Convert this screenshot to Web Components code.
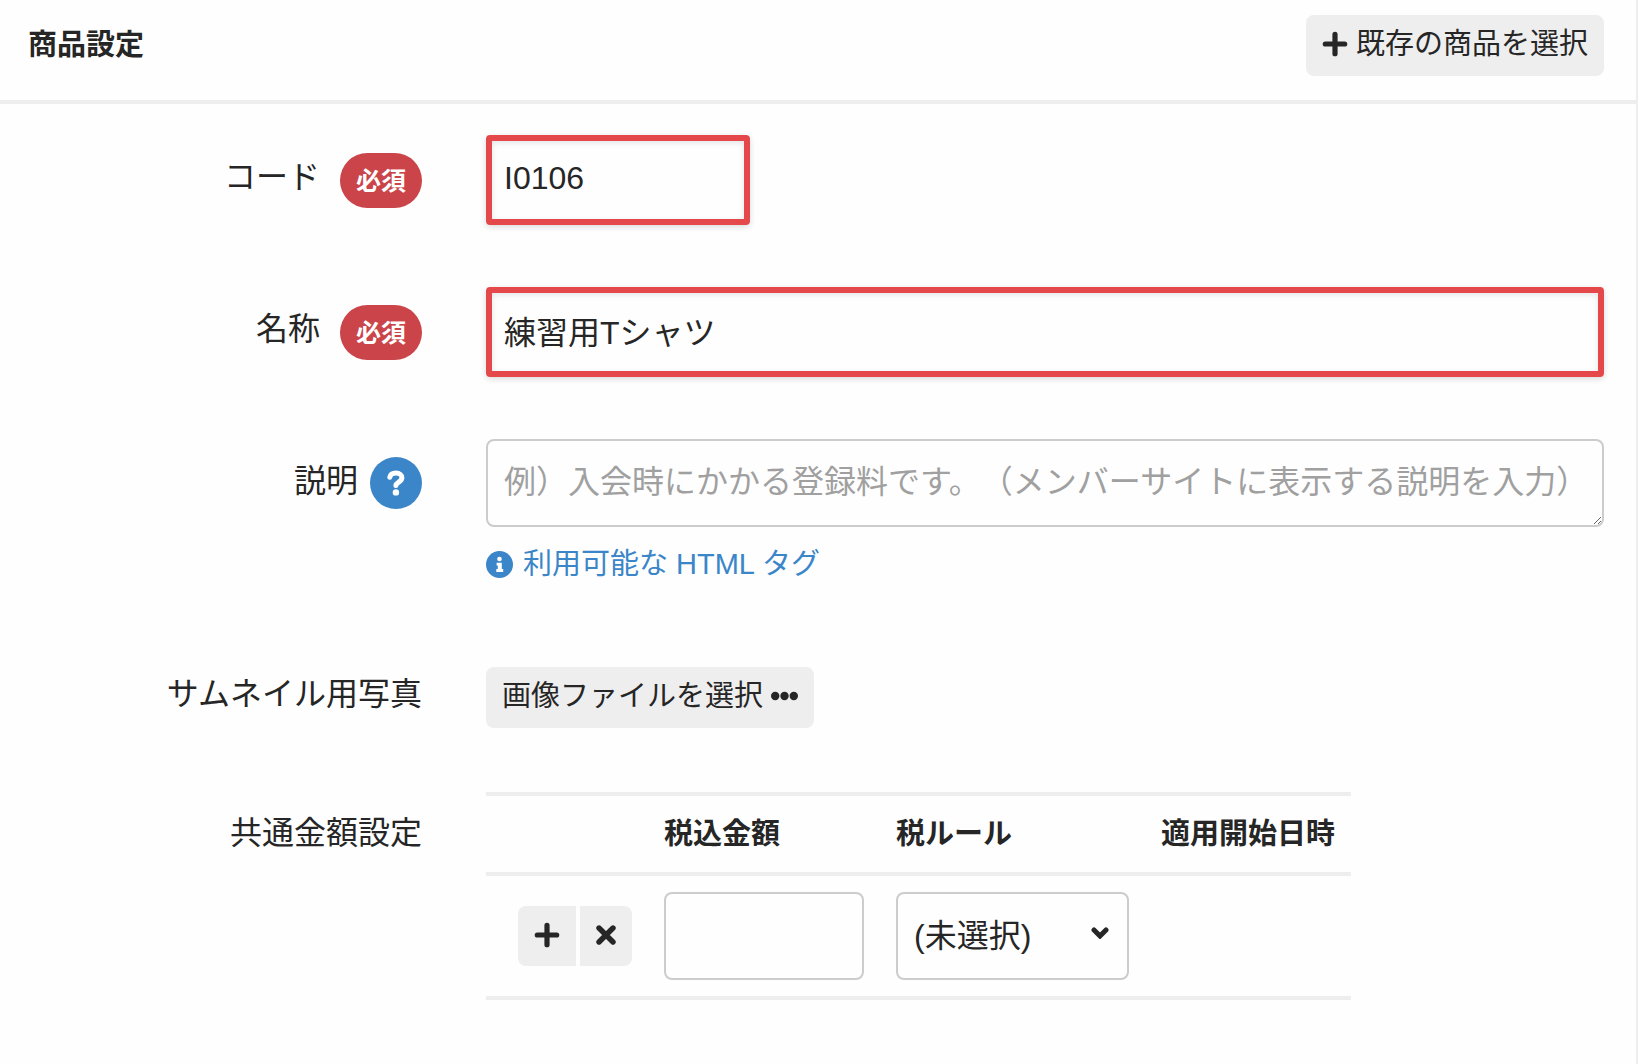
<!DOCTYPE html>
<html lang="ja">
<head>
<meta charset="utf-8">
<meta name="viewport" content="width=device-width, initial-scale=1">
<title>商品設定</title>
<style>
  :root {
    --ink: #262626;
    --line: #eeeeee;
    --edge: #cccccc;
    --blue: #3b86c8;
    --red: #ca444a;
    --mark: #e5484b;
    --hint: #a0a0a0;
    --small: 29px;
    --base: 32px;
  }
  html { background: #fefefe; }
  body {
    margin: 0;
    color: var(--ink);
    font-family: "Liberation Sans", "Noto Sans CJK JP", sans-serif;
    font-size: var(--base);
    line-height: 48px;
  }
</style>
</head>
<body>
<settings-panel>
  <h2 slot="title">商品設定</h2>
  <action-button slot="action"><fa-icon name="plus"></fa-icon>既存の商品を選択</action-button>
  <text-field label="コード" value="I0106" size="short"></text-field>
  <text-field label="名称" value="練習用Tシャツ"></text-field>
  <note-field label="説明" placeholder="例）入会時にかかる登録料です。（メンバーサイトに表示する説明を入力）">利用可能な HTML タグ</note-field>
  <plain-field label="サムネイル用写真"><action-button>画像ファイルを選択<fa-icon name="dots"></fa-icon></action-button></plain-field>
  <plain-field label="共通金額設定" tall><price-table></price-table></plain-field>
</settings-panel>

<script>
const ICONS = {
  plus: [26, 26, '<path d="M13 3.300v19.400M3.300 13h19.400" fill="none" stroke="currentColor" stroke-width="5.200" stroke-linecap="round"/>'],
  times: [20, 20, '<path d="M3 3l14 14M17 3L3 17" fill="none" stroke="currentColor" stroke-width="5.400" stroke-linecap="round"/>'],
  dots: [27, 10, '<circle cx="4.200" cy="5" r="4.200"/><circle cx="13.500" cy="5" r="4.200"/><circle cx="22.800" cy="5" r="4.200"/>'],
  question: [18, 26, '<path d="M2.800 7.300C3.400 4.500 5.700 3 8.900 3c3.700 0 6 2 6 4.700 0 4.300-5.700 4.300-6 7.800" fill="none" stroke="currentColor" stroke-width="5" stroke-linecap="round"/><circle cx="8.900" cy="22.400" r="3.200"/>'],
  info: [27, 27, '<circle cx="13.500" cy="13.500" r="13.500"/><circle cx="13.500" cy="8" r="2.300" fill="#fff"/><path d="M10.600 11.700h5.200v6.300h1.400v2.900h-6.900V18h1.500v-3.400h-1.200z" fill="#fff"/>']
};

function define(name, html) {
  customElements.define(name, class extends HTMLElement {
    constructor() {
      super();
      this.attachShadow({ mode: 'open' });
    }
    connectedCallback() {
      this.shadowRoot.innerHTML = typeof html === 'function' ? html(this) : html;
    }
  });
}

define('fa-icon', el => {
  const [w, h, body] = ICONS[el.getAttribute('name')];
  return `<style>:host{display:inline-flex;flex:none}svg{display:block}</style>
    <svg width="${w}" height="${h}" viewBox="0 0 ${w} ${h}" fill="currentColor" aria-hidden="true">${body}</svg>`;
});

define('action-button', `
  <style>
    :host { display: inline-flex; }
    button {
      display: flex; align-items: center; gap: 8px;
      border: 0; border-radius: 8px; padding: 7px 16px 10px;
      background: var(--line); color: inherit;
      font: inherit; font-size: var(--small); line-height: 44px; white-space: nowrap;
    }
  </style>
  <button type="button"><slot></slot></button>`);

define('required-badge', `
  <style>
    :host {
      display: block; padding: 4px 16px 3px; border-radius: 28px;
      background: var(--red); color: #fff;
      font-size: 25px; font-weight: 700;
    }
  </style>
  <slot></slot>`);

define('help-button', `
  <style>
    :host { display: flex; }
    button {
      display: flex; align-items: center; justify-content: center;
      width: 52px; height: 52px; padding: 0; border: 0; border-radius: 50%;
      background: var(--blue); color: #fff;
    }
  </style>
  <button type="button" aria-label="ヘルプ"><fa-icon name="question"></fa-icon></button>`);

define('settings-panel', `
  <style>
    :host {
      display: flex; flex-direction: column; box-sizing: border-box;
      min-height: 100vh; border-right: 2px solid var(--line);
    }
    header {
      display: flex; align-items: flex-start; justify-content: space-between;
      padding: 15px 32px 24px 28px; border-bottom: 4px solid var(--line);
    }
    ::slotted(h2) { margin: 0; padding-top: 8px; font-size: var(--small); line-height: 44px; }
    form {
      display: flex; flex-direction: column; gap: 62px;
      padding: 31px 32px 62px;
    }
  </style>
  <header><slot name="title"></slot><slot name="action"></slot></header>
  <form><slot></slot></form>`);

const ROW = `
  :host { display: grid; grid-template-columns: minmax(0, 15fr) minmax(0, 43fr); column-gap: 64px; }
  .head { display: flex; justify-content: flex-end; align-items: flex-start; white-space: nowrap; }
  .entry { min-width: 0; }
  input, textarea {
    display: block; box-sizing: border-box; width: 100%; margin: 0;
    background: transparent; color: inherit; font: inherit; line-height: 48px;
  }`;

define('text-field', el => `
  <style>
    ${ROW}
    .head { gap: 20px; padding-top: 18px; }
    input {
      height: 90px; padding: 13px 12px 17px;
      border: 6px solid var(--mark); border-radius: 4px;
      box-shadow: 0 2px 6px rgba(0,0,0,.14), inset 0 2px 6px rgba(0,0,0,.1);
    }
    .short { max-width: 264px; }
  </style>
  <div class="head"><label for="box">${el.getAttribute('label')}</label><required-badge>必須</required-badge></div>
  <div class="entry ${el.getAttribute('size') || ''}"><input id="box" type="text" required value="${el.getAttribute('value')}"></div>`);

define('note-field', el => `
  <style>
    ${ROW}
    .head { gap: 12px; padding-top: 18px; }
    textarea {
      height: 88px; padding: 17px 6px 19px 16px; border: 2px solid var(--edge); border-radius: 8px;
      overflow: hidden; resize: both; text-spacing-trim: space-all;
    }
    textarea::placeholder { color: var(--hint); opacity: 1; }
    a {
      display: flex; align-items: center; gap: 10px; padding: 15px 0 19px;
      color: var(--blue); font-size: var(--small); line-height: 44px; text-decoration: none;
    }
  </style>
  <div class="head"><label for="box">${el.getAttribute('label')}</label><help-button></help-button></div>
  <div class="entry">
    <textarea id="box" rows="1" placeholder="${el.getAttribute('placeholder')}"></textarea>
    <a href="#tags"><fa-icon name="info"></fa-icon><span><slot></slot></span></a>
  </div>`);

define('plain-field', el => `
  <style>
    ${ROW}
    .head { padding-top: 3px; }
    :host([tall]) .head { padding-top: 17px; }
    .entry { min-height: 63px; display: flex; align-items: flex-start; }
  </style>
  <div class="head">${el.getAttribute('label')}</div>
  <div class="entry"><slot></slot></div>`);

define('price-table', `
  <style>
    :host { display: block; }
    table { border-collapse: separate; border-spacing: 0; border-top: 4px solid var(--line); }
    th, td { padding: 16px; border-bottom: 4px solid var(--line); text-align: left; }
    th { font-size: var(--small); line-height: 44px; white-space: nowrap; }
    th:first-child, td:first-child { padding-left: 32px; }
    .pair { display: flex; gap: 4px; }
    .pair button {
      display: flex; align-items: center; justify-content: center;
      height: 60px; padding: 0 16px 2px; border: 0; background: var(--line); color: inherit;
    }
    .pair button:first-child { border-radius: 8px 0 0 8px; }
    .pair button:last-child { border-radius: 0 8px 8px 0; }
    input, select {
      display: block; box-sizing: border-box; height: 88px; margin: 0; padding: 0 16px;
      border: 2px solid var(--edge); border-radius: 8px;
      background: transparent; color: inherit; font: inherit;
    }
    input { width: 200px; }
    select {
      width: 233px; appearance: none;
      background: url('data:image/svg+xml,<svg xmlns="http://www.w3.org/2000/svg" width="18" height="12" viewBox="0 0 18 12"><path d="M3 3l6 6 6-6" fill="none" stroke="%23262626" stroke-width="5" stroke-linecap="round"/></svg>') no-repeat right 18px top 33px;
    }
  </style>
  <table>
    <thead><tr><th></th><th id="price" scope="col">税込金額</th><th id="rule" scope="col">税ルール</th><th scope="col">適用開始日時</th></tr></thead>
    <tbody><tr>
      <td><div class="pair">
        <button type="button" aria-label="追加"><fa-icon name="plus"></fa-icon></button>
        <button type="button" aria-label="削除"><fa-icon name="times"></fa-icon></button>
      </div></td>
      <td><input type="text" aria-labelledby="price"></td>
      <td><select aria-labelledby="rule"><option>(未選択)</option></select></td>
      <td></td>
    </tr></tbody>
  </table>`);
</script>
</body>
</html>
